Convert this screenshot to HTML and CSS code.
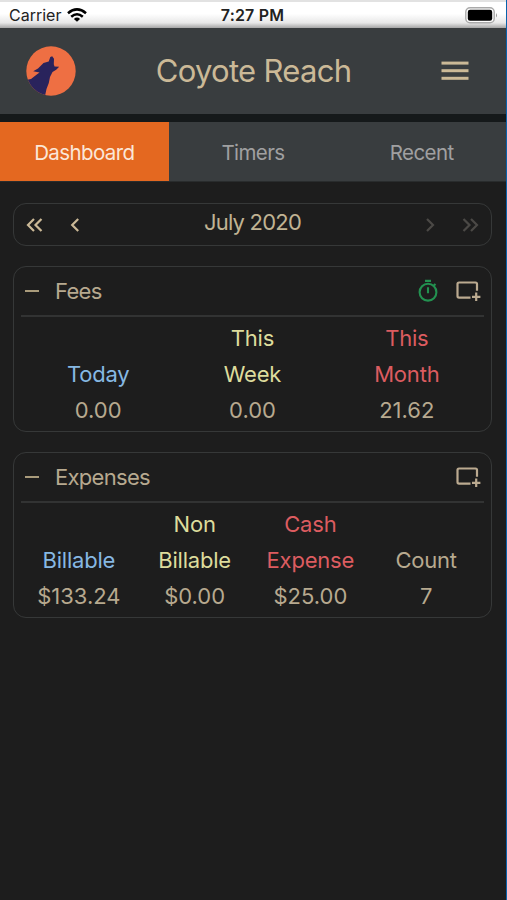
FILE: index.html
```html
<!DOCTYPE html>
<html lang="en">
<head>
  <meta charset="UTF-8" />
  <title>Coyote Reach</title>
  <link rel="stylesheet" href="styles.css">
</head>
<body>

  <div class="status-bar">
    <div class="carrier">
      <span>Carrier</span>
      <svg width="20" height="14" viewBox="0 0 20 14" fill="none" stroke="#000" stroke-width="2.6">
        <path d="M1 5.2Q10 -2.4 19 5.2" />
        <path d="M4.2 8.7Q10 3.8 15.8 8.7" />
        <path d="M10 13.8L6.9 10.9Q10 8.3 13.1 10.9Z" fill="#000" stroke="none" />
      </svg>
    </div>
    <div class="time">7:27 PM</div>
    <div class="battery">
      <svg width="33" height="17" viewBox="0 0 33 17">
        <rect x="0.8" y="0.8" width="28.4" height="15" rx="4.2" fill="#fff" stroke="#aaa" stroke-width="1.4" />
        <rect x="2.8" y="2.8" width="24.4" height="11" rx="2.2" fill="#000" />
        <path d="M31 6Q33 8.3 31 10.6Z" fill="#999" />
      </svg>
    </div>
  </div>

  <header class="header">
    <svg class="logo" width="50" height="50" viewBox="0 0 50 50">
      <clipPath id="moon"><circle cx="25" cy="25" r="24.7" /></clipPath>
      <g clip-path="url(#moon)">
        <rect width="50" height="50" fill="#ee6f43" />
        <path d="M26.2 10.2L28 12.8L27.8 18.2L28.5 20.4L33.2 20.8L30.2 23.8L26.5 26L24 31L22.8 37L20.5 43L18.8 51L0 51L0 34L5 33L10.8 28.4L13.6 26.5L7.2 25.2L12 22.5L17.5 17L22.7 15.6L24.3 11Z" fill="#29235c" />
      </g>
    </svg>
    <h1>Coyote Reach</h1>
    <svg class="menu" width="28" height="20" viewBox="0 0 28 20" fill="#cbb997">
      <rect x="0.5" y="0.6" width="27" height="3" />
      <rect x="0.5" y="8.2" width="27" height="3" />
      <rect x="0.5" y="15.8" width="27" height="3" />
    </svg>
  </header>

  <nav class="tabs">
    <div class="tab active">Dashboard</div>
    <div class="tab">Timers</div>
    <div class="tab">Recent</div>
  </nav>

  <main>
    <div class="month-picker">
      <svg width="17" height="14" viewBox="0 0 17 14"><path d="M8 1L2 7L8 13M15.5 1L9.5 7L15.5 13" /></svg>
      <svg class="prev" width="10" height="14" viewBox="0 0 10 14"><path d="M8.2 1L2.2 7L8.2 13" /></svg>
      <span class="month">July 2020</span>
      <svg class="next disabled" width="10" height="14" viewBox="0 0 10 14"><path d="M2 1L8 7L2 13" /></svg>
      <svg class="disabled" width="17" height="14" viewBox="0 0 17 14"><path d="M1.5 1L7.5 7L1.5 13M9 1L15 7L9 13" /></svg>
    </div>

    <section class="card">
      <div class="card-header">
        <span class="collapse"></span>
        <h2>Fees</h2>
        <svg class="stopwatch" width="22" height="24" viewBox="0 0 22 24" fill="none" stroke="#239150" stroke-width="2.1">
          <circle cx="11" cy="13.2" r="8.4" />
          <path d="M8 1.9H14M11 8.2V14.2M16.6 6.8L18.5 4.9" />
        </svg>
        <svg class="add" width="25" height="21" viewBox="0 0 25 21" fill="none" stroke="#bbaa90" stroke-width="2.2">
          <path d="M14.5 16.6H3Q1.5 16.6 1.5 15.1V3Q1.5 1.5 3 1.5H19.5Q21 1.5 21 3V9.8M20.2 11.6V20M16 15.8H24.4" />
        </svg>
      </div>
      <div class="columns">
        <div class="column"><span class="label blue">Today</span><span>0.00</span></div>
        <div class="column"><span class="label yellow">This<br>Week</span><span>0.00</span></div>
        <div class="column"><span class="label red">This<br>Month</span><span>21.62</span></div>
      </div>
    </section>

    <section class="card">
      <div class="card-header">
        <span class="collapse"></span>
        <h2>Expenses</h2>
        <svg class="add" width="25" height="21" viewBox="0 0 25 21" fill="none" stroke="#bbaa90" stroke-width="2.2">
          <path d="M14.5 16.6H3Q1.5 16.6 1.5 15.1V3Q1.5 1.5 3 1.5H19.5Q21 1.5 21 3V9.8M20.2 11.6V20M16 15.8H24.4" />
        </svg>
      </div>
      <div class="columns">
        <div class="column"><span class="label blue">Billable</span><span>$133.24</span></div>
        <div class="column"><span class="label yellow">Non<br>Billable</span><span>$0.00</span></div>
        <div class="column"><span class="label red">Cash<br>Expense</span><span>$25.00</span></div>
        <div class="column"><span class="label">Count</span><span>7</span></div>
      </div>
    </section>
  </main>

</body>
</html>
```
FILE: styles.css
```css
* {
  box-sizing: border-box;
}

body {
  margin: 0;
  height: 900px;
  border-right: 1px solid #0863ac;
  background: #1d1d1d;
  color: #b7a98f;
  font-family: Inter, "Liberation Sans", sans-serif;
  font-size: 22px;
  overflow: hidden;
}

svg {
  display: block;
  flex: none;
}

.status-bar {
  display: grid;
  grid-template-columns: 1fr auto 1fr;
  align-items: center;
  height: 28px;
  padding: 0 8px 0 9px;
  border-top: 2px solid #e2e2e2;
  background: linear-gradient(#fff 45%, #e8e8e8 80%, #a5a5a5);
  color: #222;
  font-size: 16px;
}

.carrier {
  display: flex;
  align-items: center;
  gap: 6px;
}

.time {
  padding-right: 2px;
  font-weight: 600;
  letter-spacing: 0.2px;
}

.battery {
  justify-self: end;
}

.header {
  display: flex;
  align-items: center;
  height: 86px;
  padding: 0 37px 0 26px;
  background: #393d3f;
}

h1 {
  flex: 1;
  margin: 0;
  padding: 0 10px 2px 0;
  color: #cbb997;
  font-size: 31px;
  font-weight: 400;
  letter-spacing: -0.7px;
  text-align: center;
}

.tabs {
  display: flex;
  height: 68px;
  border-top: 8px solid #15191a;
  border-bottom: 1px solid #292c2d;
}

.tab {
  flex: 1;
  background: #393d3f;
  color: #a0a0a1;
  font-size: 20.5px;
  letter-spacing: -0.6px;
  line-height: 61px;
  text-align: center;
}

.tab.active {
  background: #e46820;
  color: #fbe7d8;
}

main {
  padding: 21px 14px 0 13px;
}

.month-picker {
  display: flex;
  align-items: center;
  height: 43px;
  padding: 0 12px;
  border: 1px solid #363838;
  border-radius: 13px;
  fill: none;
  stroke: #cbb997;
  stroke-width: 2.2;
}

.month {
  flex: 1;
  padding-bottom: 6px;
  color: #c0b393;
  letter-spacing: -0.8px;
  stroke: none;
  text-align: center;
}

.prev {
  margin-left: 27px;
}

.next {
  margin-right: 27px;
}

.disabled {
  stroke: #4b4946;
}

.card {
  height: 166px;
  margin-top: 20px;
  padding: 0 7px;
  border: 1px solid #363838;
  border-radius: 13px;
}

.card-header {
  display: flex;
  align-items: center;
  height: 50px;
  padding: 0 3px 0 4px;
  border-bottom: 2px solid #323333;
}

.collapse {
  width: 14px;
  height: 2px;
  background: #a99b7b;
}

h2 {
  flex: 1;
  margin: 0 0 0 16px;
  font-size: 22px;
  font-weight: 400;
  letter-spacing: -0.7px;
}

.stopwatch {
  margin-right: 17px;
}

.columns {
  display: flex;
  height: 111px;
  line-height: 36px;
  text-align: center;
}

.column {
  display: flex;
  flex: 1;
  flex-direction: column;
  justify-content: flex-end;
}

.label {
  letter-spacing: -0.2px;
}

.blue {
  color: #86b8e3;
}

.yellow {
  color: #dddc9c;
}

.red {
  color: #dc5c60;
}
```
